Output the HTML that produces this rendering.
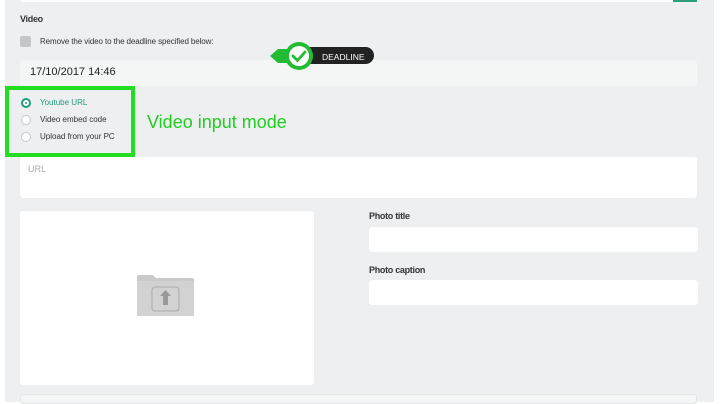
<!DOCTYPE html>
<html><head><meta charset="utf-8"><style>
*{margin:0;padding:0;box-sizing:border-box}
body{width:720px;height:402px;background:#fff;font-family:"Liberation Sans",sans-serif;position:relative;overflow:hidden}
.panel{position:absolute;left:5px;top:0;width:709px;height:402px;background:#eeeff0}
.abs{position:absolute}
.inp{position:absolute;background:#fff;border-radius:3px}
.lbl{font-size:9px;color:#333;font-weight:bold;letter-spacing:-0.3px}
</style></head><body>
<div class="panel"></div>
<div class="inp" style="left:20px;top:-4px;width:677px;height:6px;border-radius:0 0 3px 3px"></div>
<div class="abs" style="left:673px;top:0;width:24px;height:2px;background:#2aa07a"></div>
<div class="abs lbl" style="left:20px;top:14px;font-size:9px">Video</div>
<div class="abs" style="left:20px;top:36px;width:11px;height:11px;background:#c4c7ca;border-radius:2px"></div>
<div class="abs" style="left:40px;top:37px;font-size:8px;color:#333;letter-spacing:-0.1px">Remove the video to the deadline specified below:</div>
<div class="abs" style="left:20px;top:60px;width:677px;height:26px;background:#f4f5f5;border-radius:3px"></div>
<div class="abs" style="left:30px;top:66px;font-size:11px;color:#222">17/10/2017 14:46</div>
<svg class="abs" style="left:268px;top:40px" width="110" height="32" viewBox="0 0 110 32">
<rect x="30" y="7" width="76" height="17" rx="8.5" fill="#222"/>
<path d="M2 16 L10 9 L30 9 L30 23 L10 23 Z" fill="#22bb33"/>
<circle cx="31" cy="16" r="14" fill="#22bb33"/>
<circle cx="31" cy="16" r="10" fill="#fff"/>
<path d="M25 16 L29.5 20.5 L37 12" stroke="#22bb33" stroke-width="2.8" fill="none" stroke-linecap="round"/>
<text x="54" y="20" font-family="Liberation Sans" font-size="8.5" fill="#fff">DEADLINE</text>
</svg>
<div class="abs" style="left:5px;top:86px;width:130px;height:71px;border:4px solid #22dd22"></div>
<div class="abs" style="left:21px;top:98px;width:10px;height:10px;border:2.5px solid #1f9a7a;border-radius:50%;background:#fff"><div style="position:absolute;left:1.5px;top:1.5px;width:2px;height:2px;background:#1f9a7a;border-radius:50%"></div></div>
<div class="abs" style="left:40px;top:98px;font-size:8px;color:#1f9a7a">Youtube URL</div>
<div class="abs" style="left:21px;top:115px;width:10px;height:10px;border:1.5px solid #c8c8c8;border-radius:50%;background:#fff"></div>
<div class="abs" style="left:40px;top:115px;font-size:8px;color:#333">Video embed code</div>
<div class="abs" style="left:21px;top:132px;width:10px;height:10px;border:1.5px solid #c8c8c8;border-radius:50%;background:#fff"></div>
<div class="abs" style="left:40px;top:132px;font-size:8px;color:#333">Upload from your PC</div>
<div class="abs" style="left:147px;top:112px;font-size:18px;color:#22cc22">Video input mode</div>
<div class="inp" style="left:20px;top:157px;width:677px;height:41px"></div>
<div class="abs" style="left:28px;top:164px;font-size:9px;color:#aaa">URL</div>
<div class="inp" style="left:20px;top:211px;width:294px;height:174px"></div>
<svg class="abs" style="left:136px;top:273px" width="60" height="45" viewBox="0 0 60 45">
<path d="M1 4 Q1 2 3 2 L17 2 L20 5 L56 5 Q58 5 58 7 L58 43 L1 43 Z" fill="#c9c9c9"/>
<rect x="1" y="8" width="57" height="35" fill="#d2d2d2"/>
<rect x="16" y="14" width="27" height="24" rx="3" fill="none" stroke="#aaa" stroke-width="1"/>
<path d="M29.5 17 L24 23 L27 23 L27 32 L32 32 L32 23 L35 23 Z" fill="#999"/>
</svg>
<div class="abs lbl" style="left:369px;top:211px;font-size:9px">Photo title</div>
<div class="inp" style="left:369px;top:227px;width:329px;height:25px"></div>
<div class="abs lbl" style="left:369px;top:265px;font-size:9px">Photo caption</div>
<div class="inp" style="left:369px;top:280px;width:329px;height:25px"></div>
<div class="abs" style="left:20px;top:394px;width:677px;height:10px;background:#f4f5f5;border:1px solid #e4e5e6;border-radius:3px"></div>
</body></html>
